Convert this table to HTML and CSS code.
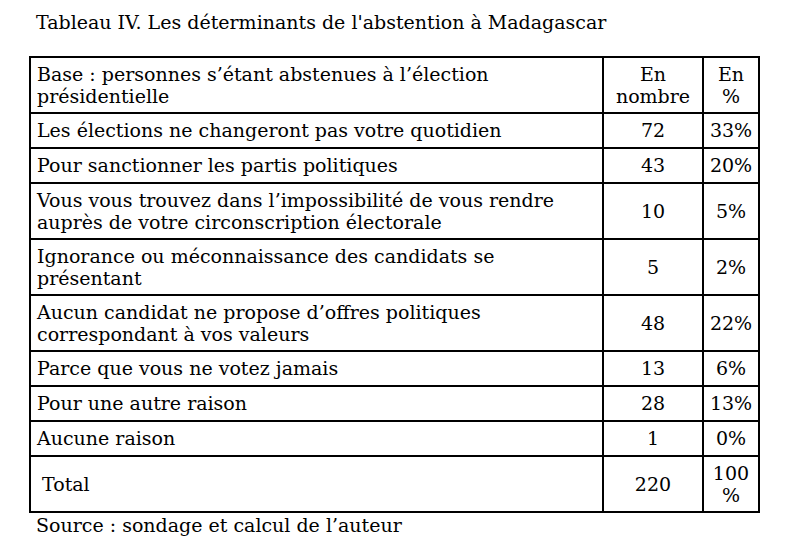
FILE: index.html
```html
<!DOCTYPE html>
<html lang="fr">
<head>
<meta charset="utf-8">
<title>Tableau IV</title>
<link rel="stylesheet" href="styles.css">
</head>
<body>
<div class="page">
  <p class="title">Tableau IV. Les déterminants de l'abstention à Madagascar</p>
  <table class="data">
    <colgroup>
      <col class="c-label">
      <col class="c-num">
      <col class="c-pct">
    </colgroup>
    <tr class="two">
      <td>Base : personnes s’étant abstenues à l’élection<br>présidentielle</td>
      <td class="num">En<br>nombre</td>
      <td class="num">En<br>%</td>
    </tr>
    <tr>
      <td>Les élections ne changeront pas votre quotidien</td>
      <td class="num">72</td>
      <td class="num">33%</td>
    </tr>
    <tr>
      <td>Pour sanctionner les partis politiques</td>
      <td class="num">43</td>
      <td class="num">20%</td>
    </tr>
    <tr class="two">
      <td>Vous vous trouvez dans l’impossibilité de vous rendre<br>auprès de votre circonscription électorale</td>
      <td class="num">10</td>
      <td class="num">5%</td>
    </tr>
    <tr class="two">
      <td>Ignorance ou méconnaissance des candidats se<br>présentant</td>
      <td class="num">5</td>
      <td class="num">2%</td>
    </tr>
    <tr class="two">
      <td>Aucun candidat ne propose d’offres politiques<br>correspondant à vos valeurs</td>
      <td class="num">48</td>
      <td class="num">22%</td>
    </tr>
    <tr>
      <td>Parce que vous ne votez jamais</td>
      <td class="num">13</td>
      <td class="num">6%</td>
    </tr>
    <tr>
      <td>Pour une autre raison</td>
      <td class="num">28</td>
      <td class="num">13%</td>
    </tr>
    <tr>
      <td>Aucune raison</td>
      <td class="num">1</td>
      <td class="num">0%</td>
    </tr>
    <tr class="two">
      <td class="total">Total</td>
      <td class="num">220</td>
      <td class="num">100<br>%</td>
    </tr>
  </table>
  <p class="source">Source : sondage et calcul de l’auteur</p>
</div>
</body>
</html>
```
FILE: styles.css
```css
html, body {
  margin: 0;
  padding: 0;
  background: #ffffff;
}

.page {
  padding: 10px 0 0 29px;
  font-family: "DejaVu Serif", "Liberation Serif", serif;
  font-size: 19px;
  line-height: 22px;
  color: #000000;
}

.title {
  margin: 0 0 0 7px;
  line-height: 24px;
  white-space: nowrap;
}

.data {
  margin-top: 22px;
  border-collapse: collapse;
  width: 729px;
  table-layout: fixed;
}

.c-label { width: 573px; }
.c-num { width: 100px; }
.c-pct { width: 56px; }

.data td {
  border: 2px solid #000000;
  padding: 5px 4px 6px 6px;
  vertical-align: middle;
  text-align: left;
  white-space: nowrap;
}

.data tr.two td {
  padding-bottom: 5px;
}

.data td.num {
  text-align: center;
  padding-left: 0;
  padding-right: 0;
}

.data td.total {
  padding-left: 11px;
}

.source {
  margin: 1px 0 0 7px;
}
```
